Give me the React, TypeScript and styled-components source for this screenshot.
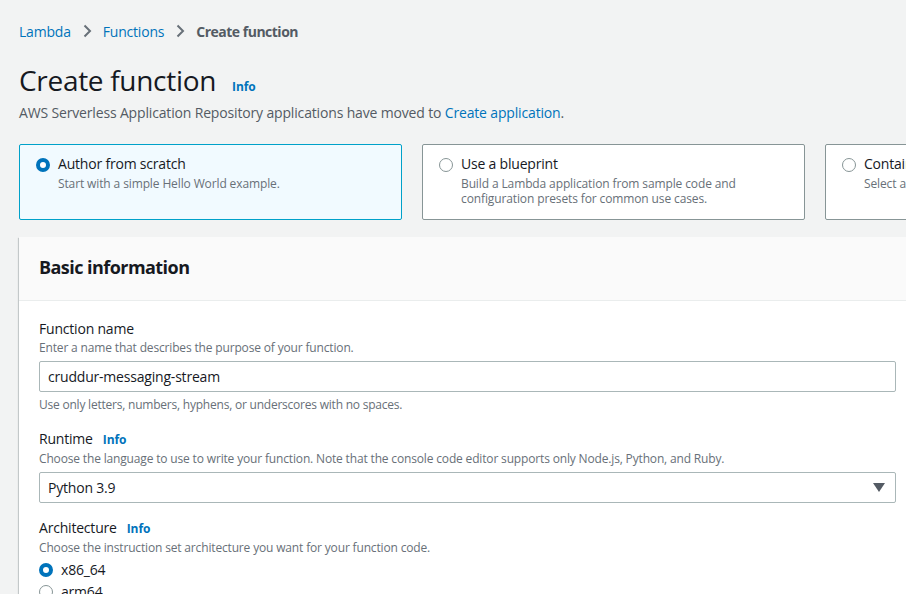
import React from "react";
import styled, { createGlobalStyle } from "styled-components";

const GlobalStyle = createGlobalStyle`
  html, body { margin: 0; padding: 0; background: #f2f3f3; overflow: hidden; }
  body { font-family: "Open Sans", "Noto Sans", Arial, sans-serif; color: #16191f; }
  * { box-sizing: border-box; }
`;

const Page = styled.div`
  width: 1300px;
  padding: 0 0 0 19px;
`;

const Breadcrumbs = styled.nav`
  display: flex;
  align-items: center;
  height: 62px;
  font-size: 14px;
  gap: 8px;
  letter-spacing: -0.2px;
`;

const Crumb = styled.a<{ $current?: boolean }>`
  color: ${(p) => (p.$current ? "#545b64" : "#0073bb")};
  font-weight: ${(p) => (p.$current ? 700 : 400)};
  letter-spacing: ${(p) => (p.$current ? "-0.5px" : "-0.2px")};
  text-decoration: none;
`;

const Chevron = styled.svg`
  width: 16px;
  height: 16px;
  flex: none;
`;

const TitleRow = styled.div`
  display: flex;
  align-items: baseline;
  gap: 16px;
  height: 36px;
`;

const Title = styled.h1`
  margin: 0;
  font-size: 28px;
  font-weight: 400;
  line-height: 36px;
  color: #16191f;
  letter-spacing: -0.3px;
`;

const InfoLink = styled.a`
  color: #0073bb;
  font-size: 12px;
  font-weight: 700;
  letter-spacing: -0.1px;
  text-decoration: none;
`;

const Subtitle = styled.p`
  margin: 4px 0 0;
  font-size: 14px;
  line-height: 22px;
  color: #545b64;
  letter-spacing: -0.16px;
  a { color: #0073bb; text-decoration: none; }
`;

const Cards = styled.div`
  display: flex;
  gap: 20px;
  margin-top: 20px;
`;

const Card = styled.div<{ $selected?: boolean }>`
  width: 383px;
  height: 76px;
  flex: none;
  border: 1px solid ${(p) => (p.$selected ? "#00a1c9" : "#879596")};
  background: ${(p) => (p.$selected ? "#f1faff" : "#ffffff")};
  border-radius: 2px;
  padding: 9px 16px 0 16px;
  display: flex;
  gap: 8px;
`;

const Radio = styled.span<{ $checked?: boolean }>`
  flex: none;
  width: 14px;
  height: 14px;
  border-radius: 50%;
  background: #fff;
  border: ${(p) => (p.$checked ? "4px solid #0073bb" : "1px solid #879596")};
`;

const CardRadio = styled(Radio)`
  margin-top: 4px;
`;

const CardText = styled.div`
  display: flex;
  flex-direction: column;
`;

const CardTitle = styled.div`
  font-size: 14px;
  line-height: 20px;
  color: #16191f;
  letter-spacing: -0.2px;
`;

const CardDesc = styled.div`
  font-size: 12px;
  line-height: 15px;
  color: #687078;
  margin-top: 2px;
  letter-spacing: -0.12px;
`;

const Panel = styled.section`
  margin-top: 17px;
  width: 897px;
  background: #fff;
  box-shadow: 0 1px 1px 0 rgba(0, 28, 36, 0.3), 1px 1px 1px 0 rgba(0, 28, 36, 0.15),
    -1px 1px 1px 0 rgba(0, 28, 36, 0.15);
`;

const PanelHeader = styled.header`
  background: #fafafa;
  border-bottom: 1px solid #eaeded;
  height: 64px;
  padding: 0 20px 4px;
  display: flex;
  align-items: center;
`;

const PanelTitle = styled.h2`
  margin: 0;
  font-size: 18px;
  font-weight: 700;
  color: #16191f;
  letter-spacing: -0.55px;
`;

const PanelBody = styled.div`
  padding: 18px 20px 20px;
  display: flex;
  flex-direction: column;
  gap: 15px;
`;

const Field = styled.div`
  display: flex;
  flex-direction: column;
`;

const Label = styled.div`
  display: flex;
  align-items: baseline;
  gap: 10px;
  font-size: 14px;
  line-height: 20px;
  color: #16191f;
  letter-spacing: -0.2px;
`;

const Desc = styled.div`
  font-size: 12px;
  line-height: 18px;
  color: #687078;
  margin-bottom: 4px;
  letter-spacing: -0.16px;
`;

const Constraint = styled(Desc)`
  margin: 4px 0 0;
  letter-spacing: -0.22px;
`;

const Input = styled.div`
  height: 31px;
  border: 1px solid #aab7b8;
  border-radius: 2px;
  padding: 0 8px;
  display: flex;
  align-items: center;
  justify-content: space-between;
  font-size: 14px;
  color: #16191f;
  background: #fff;
  letter-spacing: -0.2px;
`;

const Caret = styled.svg`
  width: 12px;
  height: 10px;
  margin-right: 2px;
`;

const RadioOption = styled.label`
  display: flex;
  align-items: center;
  gap: 8px;
  font-size: 14px;
  line-height: 20px;
  color: #16191f;
  margin-top: 2px;
  letter-spacing: -0.2px;
  &:first-of-type { margin-top: -1px; }
`;

const ChevronIcon = () => (
  <Chevron viewBox="0 0 16 16">
    <path d="M5.5 2.5 11 8l-5.5 5.5" fill="none" stroke="#687078" strokeWidth="2" />
  </Chevron>
);

export default function App() {
  return (
    <>
      <GlobalStyle />
      <Page>
        <Breadcrumbs>
          <Crumb href="#">Lambda</Crumb>
          <ChevronIcon />
          <Crumb href="#">Functions</Crumb>
          <ChevronIcon />
          <Crumb $current>Create function</Crumb>
        </Breadcrumbs>
        <TitleRow>
          <Title>Create function</Title>
          <InfoLink href="#">Info</InfoLink>
        </TitleRow>
        <Subtitle>
          AWS Serverless Application Repository applications have moved to{" "}
          <a href="#">Create application</a>.
        </Subtitle>
        <Cards>
          <Card $selected>
            <CardRadio $checked />
            <CardText>
              <CardTitle>Author from scratch</CardTitle>
              <CardDesc>Start with a simple Hello World example.</CardDesc>
            </CardText>
          </Card>
          <Card>
            <CardRadio />
            <CardText>
              <CardTitle>Use a blueprint</CardTitle>
              <CardDesc>
                Build a Lambda application from sample code and
                <br />
                configuration presets for common use cases.
              </CardDesc>
            </CardText>
          </Card>
          <Card>
            <CardRadio />
            <CardText>
              <CardTitle>Container image</CardTitle>
              <CardDesc>Select a container image to deploy for your function.</CardDesc>
            </CardText>
          </Card>
        </Cards>
        <Panel>
          <PanelHeader>
            <PanelTitle>Basic information</PanelTitle>
          </PanelHeader>
          <PanelBody>
            <Field>
              <Label>Function name</Label>
              <Desc>Enter a name that describes the purpose of your function.</Desc>
              <Input>cruddur-messaging-stream</Input>
              <Constraint>Use only letters, numbers, hyphens, or underscores with no spaces.</Constraint>
            </Field>
            <Field>
              <Label>
                Runtime <InfoLink href="#">Info</InfoLink>
              </Label>
              <Desc>
                Choose the language to use to write your function. Note that the console code editor
                supports only Node.js, Python, and Ruby.
              </Desc>
              <Input>
                Python 3.9
                <Caret viewBox="0 0 12 10">
                  <path d="M0 0h12L6 9z" fill="#545b64" />
                </Caret>
              </Input>
            </Field>
            <Field>
              <Label>
                Architecture <InfoLink href="#">Info</InfoLink>
              </Label>
              <Desc>Choose the instruction set architecture you want for your function code.</Desc>
              <RadioOption>
                <Radio $checked />
                x86_64
              </RadioOption>
              <RadioOption>
                <Radio />
                arm64
              </RadioOption>
            </Field>
          </PanelBody>
        </Panel>
      </Page>
    </>
  );
}
